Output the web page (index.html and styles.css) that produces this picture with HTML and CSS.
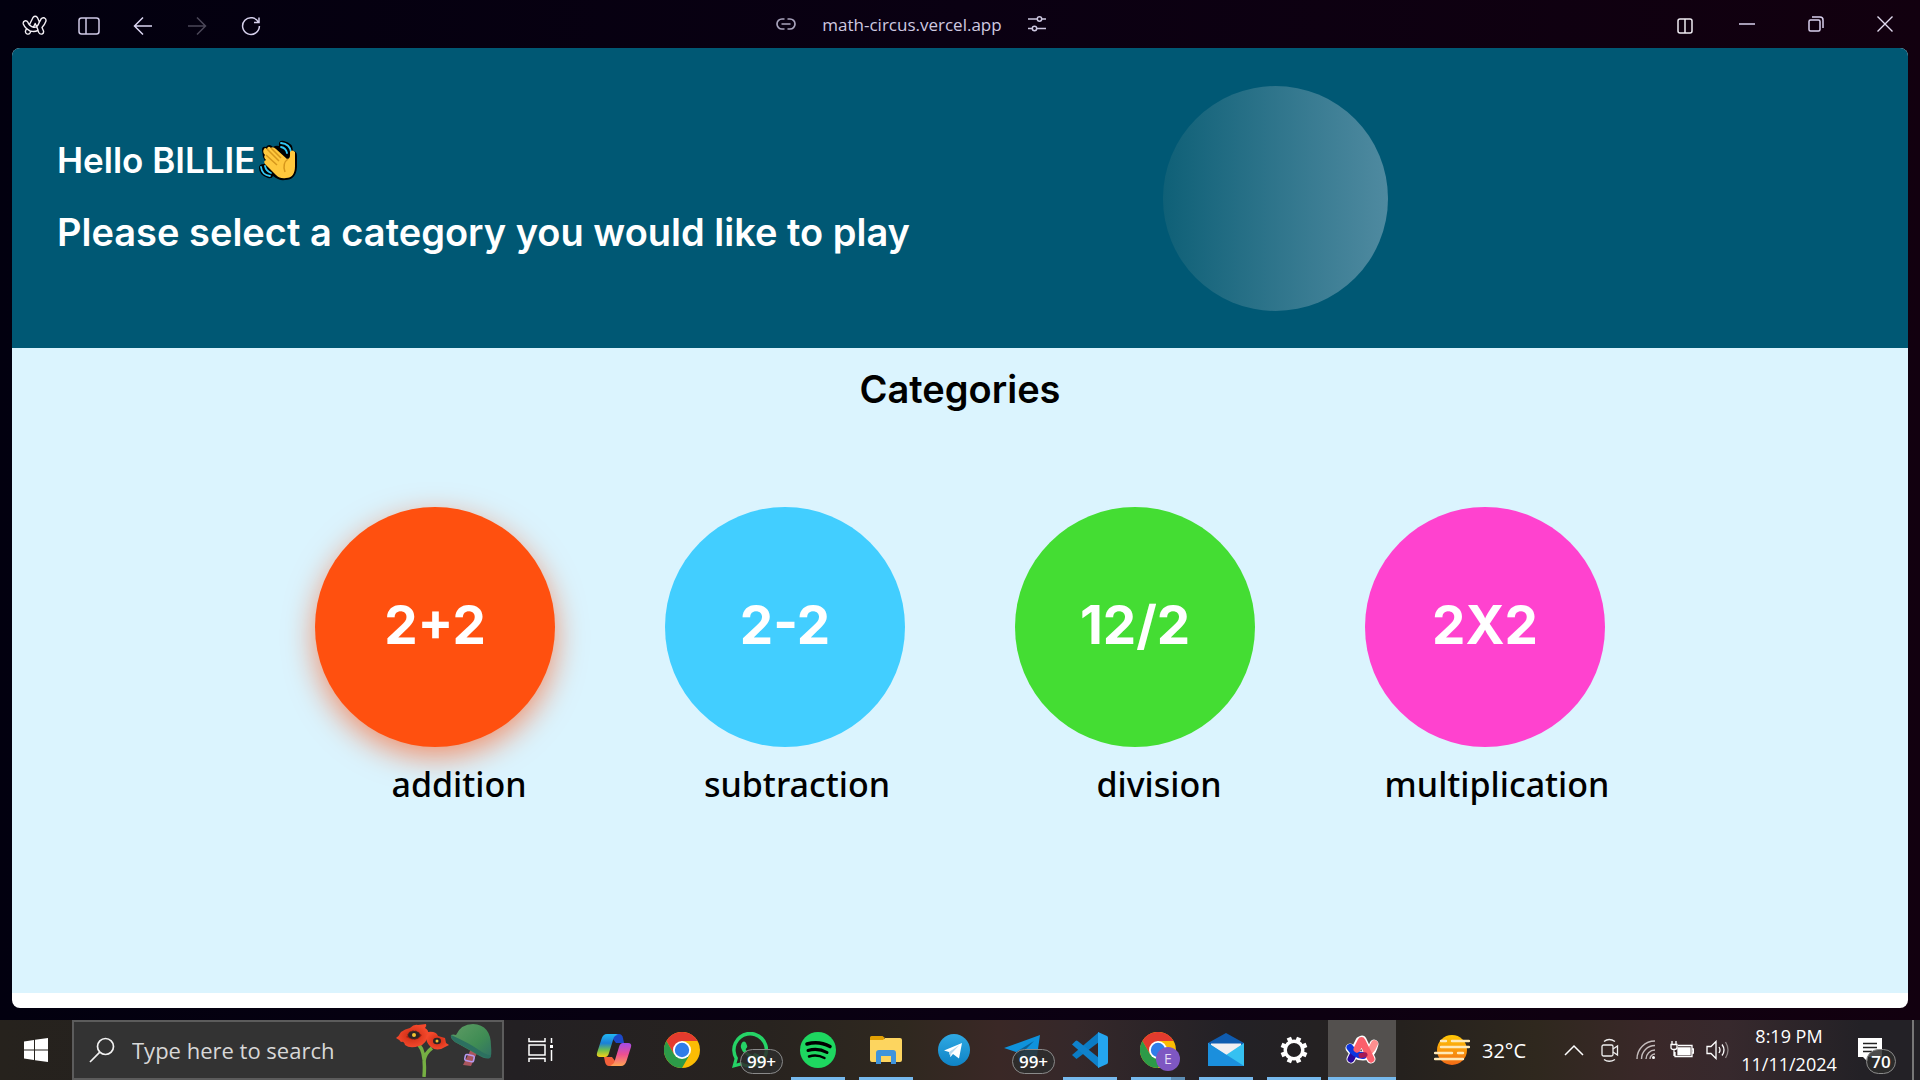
FILE: index.html
```html
<!DOCTYPE html>
<html lang="en">
<head>
<meta charset="utf-8">
<title>Math Circus</title>
<link rel="stylesheet" href="styles.css">
</head>
<body>
<div class="desktop">
  <div class="toolbar">
    <div class="tools">
      <button class="tool" aria-label="Arc menu"><svg width="26" height="22" viewBox="0 0 26 22" fill="none" stroke="#f3eff5" stroke-width="1.4" stroke-linejoin="round"><path d="M11 2.500q2.200-2.500 4.400 0l2 4.500q1-1.200 1.600-3 1.500-2 3.600-1 2 1.200 1.200 3.500-1.300 3.500-3.800 6l1.500 3.500q.5 2.200-1.500 3-2.200.5-3.200-1.500l-.9-2q-3.500 1.600-7 .6l-.8 1.700q-1.200 1.900-3.200 1.100-2-1-1.300-3.200l.9-2.100q-2.200-2-3.200-4.600-.5-2.300 1.500-3.100 2-.5 3.200 1.500.6 1.500 1.400 2.400z"/><path d="M13.200 8.500l-1.800 3.700q1.700.2 3.300-.4zM7.400 9.800q1.800 2 4 2.400M4.500 13.600l3.800 2.500M17.400 7q-.9 2.800-2.700 4.800l1.500 3.800"/></svg></button>
      <button class="tool" aria-label="Sidebar"><svg width="22" height="18" viewBox="0 0 22 18" fill="none" stroke="#cfc9e6" stroke-width="1.500"><rect x="1" y="1" width="20" height="16" rx="2.500"/><path d="M8 1v16"/></svg></button>
      <button class="tool" aria-label="Back"><svg width="20" height="20" viewBox="0 0 20 20" fill="none" stroke="#dcd6f2" stroke-width="1.500"><path d="M19 10H2M10 1.500L1.500 10l8.500 8.500"/></svg></button>
      <button class="tool" aria-label="Forward"><svg width="20" height="20" viewBox="0 0 20 20" fill="none" stroke="#4b4758" stroke-width="1.500"><path d="M1 10h17M10 1.500l8.500 8.500-8.500 8.500"/></svg></button>
      <button class="tool" aria-label="Reload"><svg width="20" height="20" viewBox="0 0 20 20" fill="none" stroke="#d6d0ec" stroke-width="1.500"><path d="M17.600 6.500A8.400 8.400 0 1 0 18.400 10M18 1.500v5h-5"/></svg></button>
    </div>
    <div class="address">
      <svg width="20" height="12" viewBox="0 0 20 12" fill="none" stroke="#a9a4bd" stroke-width="1.700"><path d="M8.500 1H6a5 5 0 0 0 0 10h2.500M11.500 1H14a5 5 0 0 1 0 10h-2.500M5.500 6h9"/></svg>
      <a class="url" href="#">math-circus.vercel.app</a>
      <svg width="18" height="16" viewBox="0 0 18 16" fill="none" stroke="#cdc7e0" stroke-width="1.500"><path d="M0 3h9M14 3h4M0 12.500h4M9 12.500h9"/><circle cx="11.500" cy="3" r="2.200"/><circle cx="6.500" cy="12.500" r="2.200"/></svg>
    </div>
    <div class="tools tools-window">
      <button class="tool" aria-label="Split view"><svg width="16" height="16" viewBox="0 0 16 16" fill="none" stroke="#efebf2" stroke-width="1.500"><rect x="1" y="1" width="14" height="14" rx="2"/><path d="M8 1v14"/></svg></button>
      <button class="tool control" aria-label="Minimize"><svg width="16" height="16" viewBox="0 0 16 16" stroke="#d9d0ee" stroke-width="1.500"><path d="M0 8h16"/></svg></button>
      <button class="tool control" aria-label="Restore"><svg width="16" height="16" viewBox="0 0 16 16" fill="none" stroke="#d9d0ee" stroke-width="1.500"><rect x="1" y="4" width="11" height="11" rx="1.500"/><path d="M4 1h8q3 0 3 3v8"/></svg></button>
      <button class="tool control" aria-label="Close"><svg width="16" height="16" viewBox="0 0 16 16" stroke="#e2dbf0" stroke-width="1.400"><path d="M.5.5l15 15M15.500.5l-15 15"/></svg></button>
    </div>
  </div>

  <div class="page">
    <header class="hero">
      <div class="greeting">
        <h1 class="hero-line hello">Hello BILLIE
          <svg class="wave" width="38" height="41" viewBox="0 0 38 41" role="img" aria-label="waving hand"><path d="M20 6q-1-6 5-5 9 2 9 10 4 0 4 5v11q-1 13-12 13-6 1-12-4-1 3-5 2Q0 35 0 28q0-4 5-4l2-1-3-6-1-7q0-4 4-3 3-4 7 0 3-2 6-1z" fill="#000"/><g fill="none" stroke="#31c7f4" stroke-width="1.800" stroke-linecap="round"><path d="M22 3q9 1 10 9M22 7q5 1 6 6M2 27q1 8 9 9M6 26q1 5 6 7"/></g><path d="M5 9q1-2 3 0 1-4 4-1 2-2 5 1l11 10q3 0 3-4v-3q2-3 5 0v14q0 12-9 12-6 1-10-3L6 24q-2-3 1-4-3-3-1-5-3-3-1-6z" fill="#ffc83d"/><path d="M8 9l12 12M12 8l10 10M7 15l11 10M29 19q-6 4-3 13" stroke="#d6971c" stroke-width="1.500" fill="none"/></svg>
        </h1>
        <p class="hero-line">Please select a category you would like to play</p>
      </div>
      <div class="moon"></div>
    </header>
    <main class="categories">
      <h2 class="title">Categories</h2>
      <ul class="grid">
        <li class="category"><button class="disc addition" aria-labelledby="c1">2+2</button><span class="name" id="c1">addition</span></li>
        <li class="category"><button class="disc subtraction" aria-labelledby="c2">2-2</button><span class="name" id="c2">subtraction</span></li>
        <li class="category"><button class="disc division" aria-labelledby="c3">12/2</button><span class="name" id="c3">division</span></li>
        <li class="category"><button class="disc multiplication" aria-labelledby="c4">2X2</button><span class="name" id="c4">multiplication</span></li>
      </ul>
    </main>
  </div>

  <footer class="taskbar">
    <button class="start" aria-label="Start"><svg width="24" height="24" viewBox="0 0 24 24" fill="#fff"><path d="M0 3.400L10 2v9.500H0zM11 1.800L24 0v11.500H11zM0 12.500h10V22L0 20.600zM11 12.500h13V24l-13-1.800z"/></svg></button>
    <form class="search">
      <svg width="26" height="26" viewBox="0 0 26 26" fill="none" stroke="#f2f2f2" stroke-width="1.700"><circle cx="16.500" cy="9.500" r="8"/><path d="M10.800 15.200L1 25"/></svg>
      <input class="search-input" type="text" aria-label="Search" placeholder="Type here to search">
      <svg class="art" width="98" height="54" viewBox="0 0 98 54"><defs><linearGradient id="hel" x1="0" y1="0" x2="1" y2="1"><stop offset="0" stop-color="#5f9c64"/><stop offset=".6" stop-color="#3f8c54"/><stop offset="1" stop-color="#2f6f66"/></linearGradient><radialGradient id="pop"><stop offset="0" stop-color="#c92a12"/><stop offset="1" stop-color="#f4492c"/></radialGradient></defs><path d="M24 22q7 8 5 32M29 38q1-8 8-13" stroke="#76b043" stroke-width="3.500" fill="none"/><path d="M1 15q3-2 5-6 4-3 9-4 4-4 8-3l8-1q1 2-1 4 4 2 3 6-1 10-9 12-9 3-14-1-1-4-4-3-1-2-5-4z" fill="url(#pop)"/><path d="M11 14q8-8 16-2-5 8-16 2z" fill="#b51f10"/><path d="M33 9q8-1 10 4l7 2 1 5 3 2-4 2q-8 5-14 0-4-3-5-9z" fill="url(#pop)"/><ellipse cx="19" cy="12" rx="6" ry="4" fill="#2a2426" stroke="#4a2a20" stroke-dasharray="2 1"/><circle cx="19" cy="12" r="2" fill="#f1c232"/><ellipse cx="42" cy="18" rx="4" ry="3.200" fill="#2a2426"/><circle cx="42" cy="18" r="1.500" fill="#f1c232"/><path d="M76 26l6 4-6 13-8-1z" fill="#a9555d"/><rect x="70" y="32" width="9" height="6" rx="1.500" fill="none" stroke="#b69af0" stroke-width="1.600" transform="rotate(12 74 35)"/><path d="M56 12q2-1 5 0Q66 1 78 1q18 1 18 22 1 9-1 12-4 2-12-3-14-8-23-13-5-4-4-7z" fill="url(#hel)"/><path d="M56 12q18 8 28 15 8 6 12 5 0 3-2 3-4 0-12-4-14-8-22-12-5-4-4-7z" fill="#2c7060"/></svg>
    </form>
    <button class="taskview" aria-label="Task view"><svg width="26" height="24" viewBox="0 0 26 24" fill="none" stroke="#fff" stroke-width="1.500"><path d="M1 0v3.500h16V0M1 24v-3.500h16V24M1 7h16v10H1zM23.500 0v5M23.500 12v11"/><path d="M22 7h3v3h-3z" fill="#fff" stroke="none"/></svg></button>
    <nav class="apps" aria-label="Apps">
      <button class="app" aria-label="Copilot"><svg width="36" height="34" viewBox="0 0 36 34"><defs><linearGradient id="cpa" x2="0" y2="1"><stop offset="0" stop-color="#22b7f2"/><stop offset=".4" stop-color="#1a7fd8"/><stop offset=".7" stop-color="#6fbf4d"/><stop offset="1" stop-color="#f6d118"/></linearGradient><linearGradient id="cpb" x2="0" y2="1"><stop offset="0" stop-color="#a34be8"/><stop offset=".5" stop-color="#ee4f90"/><stop offset="1" stop-color="#ffa552"/></linearGradient></defs><path d="M13 1h10q3 0 4 4l1 5h-8z" fill="#1c48c8"/><path d="M23 33H13q-3 0-4-4l-1-5h8z" fill="#f2603b"/><path d="M20 1h-9Q7 1 5.500 6L1 20q-1 4 3 4h5q3 0 4-4l4-13q1-5 5-5z" fill="url(#cpa)"/><path d="M16 33h9q4 0 5.500-5L35 14q1-4-3-4h-5q-3 0-4 4l-4 13q-1 5-5 5z" fill="url(#cpb)"/></svg></button>
      <button class="app" aria-label="Chrome"><svg width="36" height="36" viewBox="0 0 36 36"><circle cx="18" cy="18" r="18" fill="#fbbc04"/><path d="M2.400 9a18 18 0 0 1 31.200 0H18l-7.800 13.500z" fill="#e33b2e"/><path d="M2.400 9A18 18 0 0 0 18 36l7.800-13.500H10.200z" fill="#2c9a48"/><circle cx="18" cy="18" r="9" fill="#fff"/><circle cx="18" cy="18" r="7.200" fill="#2f7de9"/></svg></button>
      <button class="app" aria-label="WhatsApp"><svg width="36" height="36" viewBox="0 0 36 36"><path d="M0 36l2.500-9.300A18 18 0 1 1 9.300 33.500zM4.500 31.500l5.400-1.500A14.500 14.500 0 1 0 6 26z" fill="#25d366" fill-rule="evenodd"/><path d="M12 9.500q1.500 0 2 1.500l1.300 3.200q.2 1-1.700 3 2.500 4.500 7 6l2.200-2.400 4.500 2.200q.2 4-4.300 5Q19 28 13 22 7 16 9.500 11.500 10.500 9.500 12 9.500z" fill="#25d366"/></svg><span class="badge">99+</span></button>
      <button class="app open" aria-label="Spotify"><svg width="36" height="36" viewBox="0 0 36 36"><circle cx="18" cy="18" r="18" fill="#1ed760"/><g fill="none" stroke="#000" stroke-linecap="round"><path d="M7 12q12-3.500 23 2.500" stroke-width="3.600"/><path d="M8 18.500q10-3 19 2" stroke-width="3"/><path d="M9 24.500q8-2.500 15.500 1.500" stroke-width="2.500"/></g></svg></button>
      <button class="app open" aria-label="File Explorer"><svg width="32" height="28" viewBox="0 0 32 28"><path d="M0 1.500Q0 0 1.500 0h11L15 2H14v5H0z" fill="#e2a003"/><path d="M0 4h13l2-2h15q2 0 2 2v20q0 2-2 2H2q-2 0-2-2z" fill="#fdd55f"/><path d="M6 28V17q0-3 3-3h14q3 0 3 3v11h-5v-8H11v8z" fill="#3f94dc"/></svg></button>
      <button class="app" aria-label="Telegram"><svg width="32" height="32" viewBox="0 0 32 32"><defs><linearGradient id="tg" x2="0" y2="1"><stop offset="0" stop-color="#2fa9e3"/><stop offset="1" stop-color="#0f83c6"/></linearGradient></defs><circle cx="16" cy="16" r="16" fill="url(#tg)"/><path d="M6 16.500L24 9l-3 15.500-6-4.500-2.500 3-1.500-5z" fill="#fff"/><path d="M11 18l10.500-7-8 8.500-1 3.500z" fill="#b9d9ee"/></svg></button>
      <button class="app" aria-label="Telegram Desktop"><svg width="36" height="36" viewBox="0 0 36 36"><path d="M0 16L36 3l-4 28-10-6-6 5-4-10z" fill="#0f92dc"/><path d="M12 20L30 9 17 22l-1 8z" fill="#0a5f96"/></svg><span class="badge">99+</span></button>
      <button class="app open" aria-label="Visual Studio Code"><svg width="36" height="36" viewBox="0 0 36 36"><path d="M27 0v10L4.500 27 0 23z" fill="#0b7cc4"/><path d="M0 12.500L3.500 9q1-.8 2.200 0L27 26v10z" fill="#0f82cc"/><path d="M26 0l9 4q1 .6 1 2v24q0 1.400-1 2l-9 4z" fill="#24a5ef"/></svg></button>
      <button class="app open grouped" aria-label="Chrome profile E"><svg width="36" height="36" viewBox="0 0 36 36"><circle cx="18" cy="18" r="18" fill="#fbbc04"/><path d="M2.400 9a18 18 0 0 1 31.200 0H18l-7.800 13.500z" fill="#e33b2e"/><path d="M2.400 9A18 18 0 0 0 18 36l7.800-13.500H10.200z" fill="#2c9a48"/><circle cx="18" cy="18" r="9" fill="#fff"/><circle cx="18" cy="18" r="7.200" fill="#2f7de9"/></svg><span class="profile">E</span></button>
      <button class="app open" aria-label="Mail"><svg width="36" height="34" viewBox="0 0 36 34"><path d="M0 10L18 0l18 10v4H0z" fill="#0f5cb0"/><path d="M3 10.500h30V24H3z" fill="#f1eff2"/><path d="M0 10l18 12 18-12v23H0z" fill="#35c1f1"/><path d="M0 10l36 23H0z" fill="#1b8fdd"/></svg></button>
      <button class="app open" aria-label="Settings"><svg width="28" height="28" viewBox="-14 -14 28 28"><circle r="8.800" fill="none" stroke="#fff" stroke-width="3.400"/><g stroke="#fff" stroke-width="4.600"><path d="M0-9v-4.500M0 9v4.500" transform="rotate(22.500)"/><path d="M0-9v-4.500M0 9v4.500" transform="rotate(67.500)"/><path d="M0-9v-4.500M0 9v4.500" transform="rotate(112.500)"/><path d="M0-9v-4.500M0 9v4.500" transform="rotate(157.500)"/></g></svg></button>
      <button class="app open active" aria-label="Arc"><svg width="34" height="30" viewBox="0 0 34 30" fill="none" stroke-linecap="round" stroke-linejoin="round"><path d="M5 13q5 8 13 8t11-12M6 24l9-18 2-1 9 19" stroke="#fff" stroke-width="9"/><path d="M18 20.500q8-3 11.500-12" stroke="#ff8f8f" stroke-width="7"/><path d="M6 24l3-6" stroke="#2a0a9c" stroke-width="7"/><path d="M5 12.500q5 8 13 8" stroke="#0b35e0" stroke-width="7"/><path d="M12 14l4-8q.5-1 1 0L26 24" stroke="#fb5f6b" stroke-width="7"/><path d="M16 20.500l4-.7" stroke="#a81a55" stroke-width="5"/></svg></button>
    </nav>
    <div class="tray">
      <button class="weather"><svg width="36" height="32" viewBox="0 0 36 32"><defs><linearGradient id="sun" x2="0" y2="1"><stop offset="0" stop-color="#ffc805"/><stop offset="1" stop-color="#f26a16"/></linearGradient></defs><circle cx="18" cy="16" r="15" fill="url(#sun)"/><g stroke="#ffe9b8" stroke-width="2.400" stroke-linecap="round"><path d="M7 7h5M18 7h17M7 13h28M1 19h17M24 19h5M1 25h28"/></g></svg>32°C</button>
      <button class="icon" aria-label="Show hidden icons"><svg width="20" height="12" viewBox="0 0 20 12" fill="none" stroke="#fff" stroke-width="1.500"><path d="M1 11l9-9 9 9"/></svg></button>
      <button class="icon" aria-label="Meet now"><svg width="18" height="24" viewBox="0 0 18 24" fill="none" stroke="#eee" stroke-width="1.300"><rect x="1" y="7" width="11" height="11" rx="1.500"/><path d="M12 11l4.500-3v9L12 14M3 3.500q5-4 11 0M3 21.500q5 3.500 11 0"/></svg></button>
      <button class="icon" aria-label="Network"><svg width="20" height="20" viewBox="0 0 20 20" fill="none" stroke="#c4bcbc" stroke-width="1.400"><path d="M1 19A18 18 0 0 1 19 1M5.500 19A13.500 13.500 0 0 1 19 5.500M10 19a9 9 0 0 1 9-9M14 19a5 5 0 0 1 5-5"/><circle cx="17.500" cy="17.500" r="1.500" fill="#fff" stroke="none"/></svg></button>
      <button class="icon" aria-label="Battery"><svg width="24" height="18" viewBox="0 0 24 18" fill="none" stroke="#fff" stroke-width="1.300"><path d="M8 4.500h14v11H5V11M22 8h1.500v4H22M2 0v3M6 0v3M1 3.500h6v3q0 2-3 2T1 6.500zM4 9v6"/><path d="M8 7h12v6.500H8z" fill="#fff"/></svg></button>
      <button class="icon" aria-label="Volume"><svg width="24" height="20" viewBox="0 0 24 20" fill="none" stroke="#fff" stroke-width="1.300"><path d="M1 6.500h4l5-5v17l-5-5H1zM13 7q2 3 0 6M16 4.500q4 5.500 0 11"/><path d="M19.500 2q5 8 0 16" stroke="#8d8585"/></svg></button>
      <time class="clock"><span>8:19 PM</span><span>11/11/2024</span></time>
      <button class="notes" aria-label="Notifications"><svg width="24" height="24" viewBox="0 0 24 24"><path d="M0 0h24v19H10v5l-5-5H0z" fill="#fff"/><path d="M5 5.500h14M5 9.500h14M5 13.500h9" stroke="#222" stroke-width="1.400"/></svg><span class="badge round">70</span></button>
    </div>
  </footer>
</div>
</body>
</html>
```
FILE: styles.css
```css
* { box-sizing: border-box; }
body { margin: 0; }
button { border: 0; padding: 0; background: none; color: inherit; font: inherit; }
svg { display: block; flex: none; }

.desktop {
  display: flex;
  flex-direction: column;
  min-height: 100vh;
  background: linear-gradient(90deg, #02000f, #0a0012 50%, #12000f);
  font-family: "Open Sans", "Noto Sans", sans-serif;
}

/* Browser toolbar */
.toolbar {
  display: grid;
  grid-template-columns: 1fr auto 1fr;
  height: 48px;
}
.tools { display: flex; align-items: center; padding-left: 8px; }
.tools-window { justify-content: flex-end; padding: 0 1px 0 0; }
.tool { display: flex; justify-content: center; align-items: center; width: 54px; height: 100%; padding-top: 3px; }
.control { width: 69px; padding: 0; }
.address { display: flex; align-items: center; gap: 26px; padding-right: 98px; }
.url { color: #cfc9e0; font-size: 17px; text-decoration: none; }

/* Web page */
.page {
  display: flex;
  flex: 1;
  flex-direction: column;
  margin: 0 12px 12px;
  padding-bottom: 15px;
  border-radius: 8px;
  overflow: hidden;
  background: #fff;
  font-family: Inter, sans-serif;
}
.hero {
  display: flex;
  justify-content: space-between;
  align-items: center;
  min-height: 300px;
  padding: 0 520px 0 45px;
  background: #005874;
  color: #fff;
}
.greeting { padding-bottom: 4px; }
.hero-line {
  display: flex;
  align-items: center;
  gap: 4px;
  margin: 0;
  font-size: 38px;
  font-weight: 600;
  line-height: 72px;
}
.hello { font-size: 35px; }
.moon {
  flex: none;
  width: 225px;
  height: 225px;
  border-radius: 50%;
  background: linear-gradient(90deg, #0f6077, #4f8aa0);
}
.categories { flex: 1; padding-top: 14px; background: #dbf4fe; color: #000; }
.title { margin: 0; font-size: 38px; font-weight: 600; line-height: 54px; text-align: center; }
.grid {
  display: flex;
  justify-content: center;
  gap: 110px;
  margin: 91px 0 0;
  padding: 0;
  list-style: none;
}
.category { display: flex; flex-direction: column; align-items: center; gap: 10px; width: 240px; }
.disc {
  width: 240px;
  height: 240px;
  padding-bottom: 4px;
  border-radius: 50%;
  color: #fff;
  font-size: 53px;
  font-weight: 700;
}
.addition { background: #ff500f; box-shadow: 0 10px 30px rgba(255, 80, 15, 0.6); }
.subtraction { background: #42ceff; }
.division { background: #44dd33; }
.multiplication { background: #ff42cf; }
.name { font-family: "Noto Sans", sans-serif; font-size: 34px; font-weight: 500; line-height: 54px; white-space: nowrap; }
.category:nth-child(odd) .name { padding-left: 48px; }
.category:nth-child(even) .name { padding-left: 24px; }

/* Taskbar */
.taskbar {
  display: flex;
  height: 60px;
  background: linear-gradient(90deg, #26221d, #232023 27%, #28231f 40%, #2f281f 47%, #3a2826 52%, #35282a 56%, #232126 64%, #25211e 73%, #2f281e 80%, #3a2829 86%, #37292d 90%, #232126 97%);
  color: #fff;
}
.start { display: flex; justify-content: center; align-items: center; width: 72px; }
.search {
  display: flex;
  align-items: center;
  gap: 17px;
  width: 432px;
  padding: 0 9px 0 15px;
  border: 2px solid #5c5c5c;
  background: #333;
}
.search-input {
  flex: 1;
  min-width: 0;
  padding: 0;
  border: 0;
  background: none;
  color: #d8d8d8;
  font: 22px "Open Sans", sans-serif;
}
.search-input::placeholder { color: #d8d8d8; opacity: 1; }
.taskview { display: flex; justify-content: center; align-items: center; width: 76px; padding-right: 2px; }
.apps { display: flex; }
.app { display: flex; position: relative; justify-content: center; align-items: center; width: 68px; }
.open::after {
  content: "";
  position: absolute;
  bottom: 0;
  left: 7px;
  width: 54px;
  height: 3px;
  background: #76b9ed;
}
.grouped::after { background: linear-gradient(90deg, #76b9ed 40px, #5d8eb5 40px); }
.active { background: #53504e; }
.active::after { left: 0; width: 100%; }
.badge {
  position: absolute;
  left: 24px;
  bottom: 6px;
  width: 43px;
  height: 25px;
  border: 1px solid #8a8a8a;
  border-radius: 13px;
  background: rgba(45, 45, 45, 0.85);
  font-size: 17px;
  font-weight: 600;
  line-height: 23px;
  text-align: center;
}
.round { width: 30px; }
.profile {
  position: absolute;
  left: 32px;
  bottom: 9px;
  width: 24px;
  height: 24px;
  border-radius: 50%;
  background: #7e57c2;
  color: #e6dcf5;
  font-size: 14px;
  line-height: 24px;
}
.tray { display: flex; flex: 1; justify-content: flex-end; align-items: stretch; padding-right: 6px; border-right: 2px solid #777; margin-right: 6px; }
.weather { display: flex; align-items: center; gap: 12px; margin-right: 30px; font-size: 20px; }
.icon { display: flex; justify-content: center; align-items: center; width: 36px; }
.clock { display: flex; flex-direction: column; justify-content: center; width: 106px; font-size: 18px; line-height: 28px; text-align: center; }
.notes { display: flex; position: relative; align-items: center; width: 64px; padding: 0 16px; }
```
